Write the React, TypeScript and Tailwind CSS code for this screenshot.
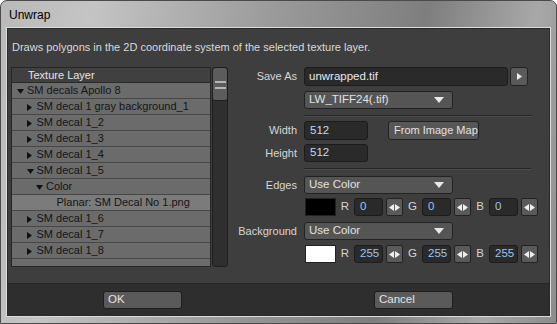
import React from "react";

const font = { fontFamily: '"Liberation Sans", Arial, sans-serif' };

function Tri({ dir, color = "#111" }: { dir: "down" | "right" | "left"; color?: string }) {
  if (dir === "down")
    return (
      <svg width="7" height="5" viewBox="0 0 7 5" className="block">
        <polygon points="0,0 7,0 3.5,5" fill={color} />
      </svg>
    );
  if (dir === "right")
    return (
      <svg width="5" height="7" viewBox="0 0 5 7" className="block">
        <polygon points="0,0 5,3.5 0,7" fill={color} />
      </svg>
    );
  return (
    <svg width="5" height="7" viewBox="0 0 5 7" className="block">
      <polygon points="5,0 0,3.5 5,7" fill={color} />
    </svg>
  );
}

type Row = { level: number; arrow?: "down" | "right"; text: string; sel?: boolean };
const rows: Row[] = [
  { level: 0, arrow: "down", text: "SM decals Apollo 8" },
  { level: 1, arrow: "right", text: "SM decal 1 gray background_1" },
  { level: 1, arrow: "right", text: "SM decal 1_2" },
  { level: 1, arrow: "right", text: "SM decal 1_3" },
  { level: 1, arrow: "right", text: "SM decal 1_4" },
  { level: 1, arrow: "down", text: "SM decal 1_5" },
  { level: 2, arrow: "down", text: "Color" },
  { level: 3, text: "Planar: SM Decal No 1.png", sel: true },
  { level: 1, arrow: "right", text: "SM decal 1_6" },
  { level: 1, arrow: "right", text: "SM decal 1_7" },
  { level: 1, arrow: "right", text: "SM decal 1_8" },
];

function Dropdown({ text }: { text: string }) {
  return (
    <div className="w-[149px] h-[18px] rounded-[3px] border border-[#222] bg-[#555555] flex items-center justify-between pl-[4px] pr-[8px] text-[11.5px] text-[#e2e2e2]">
      <span>{text}</span>
      <svg width="10" height="6" viewBox="0 0 10 6" className="block">
        <polygon points="0,0 10,0 5,6" fill="#e8e8e8" />
      </svg>
    </div>
  );
}

function Spin() {
  return (
    <div className="w-[17px] h-[18px] rounded-[2px] border border-[#222] bg-[#5a5a5a] flex items-center justify-center gap-[1px]">
      <Tri dir="left" color="#eee" />
      <Tri dir="right" color="#eee" />
    </div>
  );
}

function NumField({ v }: { v: string }) {
  return (
    <div className="w-[29px] h-[18px] rounded-[3px] border border-[#1c1c1c] bg-[#2a2a2a] flex items-center pl-[5px] text-[11.5px] text-[#9fc3f0]">
      {v}
    </div>
  );
}

function ColorRow({ swatch, v }: { swatch: string; v: string }) {
  return (
    <div className="flex items-center h-[18px]">
      <div className="w-[31px] h-[18px] border border-[#222]" style={{ background: swatch }} />
      <span className="w-[18px] text-center text-[11.5px] text-[#d4d4d4]">R</span>
      <NumField v={v} />
      <div className="ml-[3px]"><Spin /></div>
      <span className="w-[19px] text-center text-[11.5px] text-[#d4d4d4]">G</span>
      <NumField v={v} />
      <div className="ml-[3px]"><Spin /></div>
      <span className="w-[18px] text-center text-[11.5px] text-[#d4d4d4]">B</span>
      <NumField v={v} />
      <div className="ml-[3px]"><Spin /></div>
    </div>
  );
}

function Sep() {
  return (
    <div className="w-[227px] h-[2px] border-t border-[#262626] border-b border-b-[#4c4c4c]" />
  );
}

function Label({ children }: { children: React.ReactNode }) {
  return <div className="w-[62px] whitespace-nowrap text-right text-[11px] text-[#d6d6d6] mr-[7px]">{children}</div>;
}

export default function App() {
  return (
    <div
      className="w-[557px] h-[324px] rounded-t-[7px] border border-[#4a4a4a] flex flex-col overflow-hidden"
      style={{
        ...font,
        background:
          "linear-gradient(100deg, #b9b9b9 0%, #c4c4c4 15%, #9a9a9a 45%, #7e7e7e 70%, #a8a8a8 88%, #8c8c8c 100%)",
      }}
    >
      <div className="h-[26px] flex items-center pl-[8px] pt-[1px] text-[12px] text-black">Unwrap</div>
      <div className="flex-1 mx-[5px] mb-[6px] border border-[#dcdcdc] p-0">
        <div className="h-full border border-[#2a2a2a] bg-[#3e3e3e] flex flex-col">
          <div className="pl-[4px] pt-[11px] h-[38px] text-[11px] leading-[14px] text-[#dadada]">
            Draws polygons in the 2D coordinate system of the selected texture layer.
          </div>
          <div className="flex flex-1">
            {/* tree */}
            <div className="ml-[3px] flex h-[200px]">
              <div className="w-[200px] h-[200px] border border-[#262626] bg-[#3a3a3a] overflow-hidden">
                <div className="h-[15px] border-b border-[#2a2a2a] bg-[#404040] flex items-center pl-[16px] text-[11px] text-[#e6e6e6]">
                  Texture Layer
                </div>
                {rows.map((r, i) => (
                  <div
                    key={i}
                    className={`h-[16px] border-b border-[#474747] flex items-center text-[11px] text-[#151515] ${r.sel ? "bg-[#7b7b7b]" : "bg-[#6b6b6b]"}`}
                  >
                    <div className="w-[15px] shrink-0" style={{ marginLeft: r.level * 9.5 }} />
                    {r.arrow && (
                      <div className="w-0 relative">
                        <div className={`absolute ${r.arrow === "down" ? "-left-[10px] -top-[2px]" : "-left-[10px] -top-[3px]"}`}>
                          <Tri dir={r.arrow} />
                        </div>
                      </div>
                    )}
                    <span className={r.level === 3 ? "ml-[1px]" : ""}>{r.text}</span>
                  </div>
                ))}
                <div className="h-[16px] bg-[#6b6b6b]" />
              </div>
              <div className="ml-[1px] w-[16px] h-[200px] rounded-[3px] border border-[#1e1e1e] bg-[#2f2f2f] overflow-hidden">
                <div className="h-[33px] rounded-[3px] bg-[#5c5c5c] border-b border-[#222] flex flex-col items-center pt-[13px] gap-[4px]">
                  <div className="w-[11px] h-[2px] bg-[#b4b4b4]" />
                  <div className="w-[11px] h-[2px] bg-[#b4b4b4]" />
                </div>
              </div>
            </div>
            {/* right panel */}
            <div className="ml-[7px] flex flex-col">
              <div className="flex items-center h-[19px]">
                <Label>Save As</Label>
                <div className="w-[204px] h-[19px] rounded-[3px] border border-[#1c1c1c] bg-[#2a2a2a] flex items-center pl-[4px] text-[11.5px] text-[#e4e8ee]">
                  unwrapped.tif
                </div>
                <div className="ml-[2px] w-[18px] h-[19px] rounded-[3px] border border-[#222] bg-[#5a5a5a] flex items-center justify-center">
                  <Tri dir="right" color="#eee" />
                </div>
              </div>
              <div className="flex items-center mt-[5px]">
                <div className="w-[69px]" />
                <Dropdown text="LW_TIFF24(.tif)" />
              </div>
              <div className="flex mt-[6px]">
                <div className="w-[69px]" />
                <Sep />
              </div>
              <div className="flex items-center mt-[4px] h-[19px]">
                <Label>Width</Label>
                <div className="w-[64px] h-[19px] rounded-[3px] border border-[#1c1c1c] bg-[#2a2a2a] flex items-center pl-[5px] text-[11.5px] text-[#c6d8f0]">
                  512
                </div>
                <div className="ml-[20px] w-[91px] h-[19px] whitespace-nowrap rounded-[3px] border border-[#222] bg-[#575757] flex items-center pl-[5px] text-[11px] text-[#e2e2e2]">
                  From Image Map
                </div>
              </div>
              <div className="flex items-center mt-[4px] h-[18px]">
                <Label>Height</Label>
                <div className="w-[64px] h-[18px] rounded-[3px] border border-[#1c1c1c] bg-[#2a2a2a] flex items-center pl-[5px] text-[11.5px] text-[#c6d8f0]">
                  512
                </div>
              </div>
              <div className="flex mt-[6px]">
                <div className="w-[69px]" />
                <Sep />
              </div>
              <div className="flex items-center mt-[6px]">
                <Label>Edges</Label>
                <Dropdown text="Use Color" />
              </div>
              <div className="flex items-center mt-[4px]">
                <div className="w-[70px]" />
                <ColorRow swatch="#000000" v="0" />
              </div>
              <div className="flex items-center mt-[6px]">
                <Label>Background</Label>
                <Dropdown text="Use Color" />
              </div>
              <div className="flex items-center mt-[5px]">
                <div className="w-[70px]" />
                <ColorRow swatch="#ffffff" v="255" />
              </div>
            </div>
          </div>
          <div className="h-[32px] border-t border-[#262626] bg-[#2e2e2e] flex items-center">
            <div className="ml-[95px] w-[79px] h-[18px] rounded-[3px] border border-[#1e1e1e] bg-[#5a5a5a] flex items-center pl-[4px] text-[11.5px] text-[#e4e4e4]">
              OK
            </div>
            <div className="ml-[192px] w-[79px] h-[18px] rounded-[3px] border border-[#1e1e1e] bg-[#5a5a5a] flex items-center pl-[4px] text-[11.5px] text-[#e4e4e4]">
              Cancel
            </div>
          </div>
        </div>
      </div>
    </div>
  );
}
